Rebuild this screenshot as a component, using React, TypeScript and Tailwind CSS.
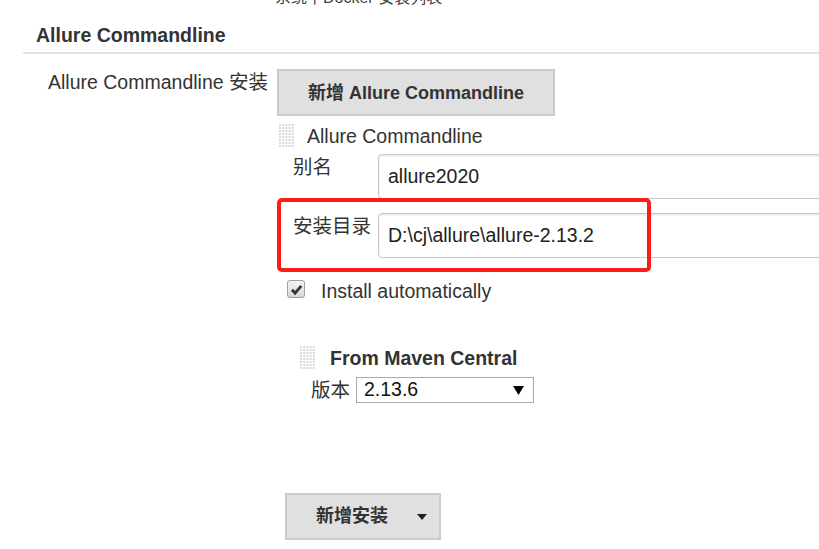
function Grip() {
	const dots = [];
	for (let r = 0; r < 8; r++) {
		for (let c = 0; c < 5; c++) {
			dots.push(
				<rect key={`${r}-${c}`} x={c * 3.2} y={r * 3} width="2" height="2" fill="#dadada" />,
			);
		}
	}
	return (
		<svg width="16" height="24" viewBox="0 0 16 24" className="shrink-0">
			{dots}
		</svg>
	);
}

function Field({ label, value }: { label: string; value: string }) {
	return (
		<div className="flex pl-[16px]">
			<div className="w-[85px] shrink-0 pt-[1px] leading-[24px]">{label}</div>
			<div className="flex h-[45px] w-[600px] shrink-0 items-center rounded-l-[4px] border border-[#c8c8c8] pl-[9px] text-[#222] shadow-[inset_0_1px_2px_rgba(0,0,0,0.12)]">
				{value}
			</div>
		</div>
	);
}

export default function App() {
	return (
		<div className="relative h-[549px] w-[819px] overflow-hidden bg-white font-['Liberation_Sans','Noto_Sans_CJK_SC',sans-serif] text-[19.5px] text-[#333]">
			<div className="-mt-[10px] pl-[275px] text-[16px] leading-[16px] text-[#444]">
				系统下Docker 安装列表
			</div>

			<div className="mt-[17px] pl-[36px] font-bold leading-[24px]">
				Allure Commandline
			</div>
			<div className="ml-[23px] mt-[5px] h-[2px] bg-[#e2e2e2]" />

			<div className="mt-[15px] flex pl-[48px]">
				<div className="w-[229px] shrink-0 pt-[1px] leading-[24px]">
					Allure Commandline 安装
				</div>

				<div className="flex flex-col">
					<button
						type="button"
						className="h-[47px] w-[278px] border-2 border-[#cbcbcb] bg-[#e0e0e0] pt-[2px] text-[18px] font-bold text-[#333]"
					>
						新增 Allure Commandline
					</button>

					<div className="mt-[8px] flex h-[24px] items-center gap-[12px] pl-[2px] leading-[24px]">
						<Grip />
						<span>Allure Commandline</span>
					</div>

					<div className="mt-[6px] flex flex-col gap-[14px]">
						<Field label="别名" value="allure2020" />
						<Field label="安装目录" value="D:\cj\allure\allure-2.13.2" />
					</div>

					<div className="mt-[21px] flex items-start gap-[16px] pl-[10px] leading-[24px]">
						<div className="mt-[1px] flex h-[18px] w-[18px] items-center justify-center rounded-[3px] border border-[#a0a0a0] bg-gradient-to-b from-[#f4f4f4] to-[#d8d8d8]">
							<svg width="13" height="13" viewBox="0 0 12 12">
								<path d="M1.8 6.3 L4.7 9.3 L10.4 2.6" fill="none" stroke="#333" strokeWidth="2.6" />
							</svg>
						</div>
						<span>Install automatically</span>
					</div>

					<div className="mt-[43px] flex h-[24px] items-center gap-[14px] pl-[23px] font-bold leading-[24px]">
						<Grip />
						<span>From Maven Central</span>
					</div>

					<div className="mt-[7px] flex items-center pl-[34px]">
						<div className="w-[45px] shrink-0 leading-[24px]">版本</div>
						<div className="flex h-[26px] w-[178px] items-center justify-between border border-[#a9a9a9] pl-[7px] pr-[9px] text-[19.5px] text-[#111]">
							<span>2.13.6</span>
							<svg width="11" height="9" viewBox="0 0 11 9">
								<path d="M0 0 H11 L5.5 9 Z" fill="#000" />
							</svg>
						</div>
					</div>

					<div className="mt-[90px] pl-[8px]">
						<button
							type="button"
							className="flex h-[47px] w-[156px] items-center border-2 border-[#cbcbcb] bg-[#e0e0e0] pl-[29px] text-[18px] font-bold text-[#333]"
						>
							新增安装
							<svg width="10" height="6" viewBox="0 0 10 6" className="ml-[29px]">
								<path d="M0 0 H10 L5 6 Z" fill="#222" />
							</svg>
						</button>
					</div>
				</div>
			</div>

			<div className="pointer-events-none absolute left-[277px] top-[198px] h-[74px] w-[374px] rounded-[5px] border-4 border-[#ff1a1a]" />
		</div>
	);
}
